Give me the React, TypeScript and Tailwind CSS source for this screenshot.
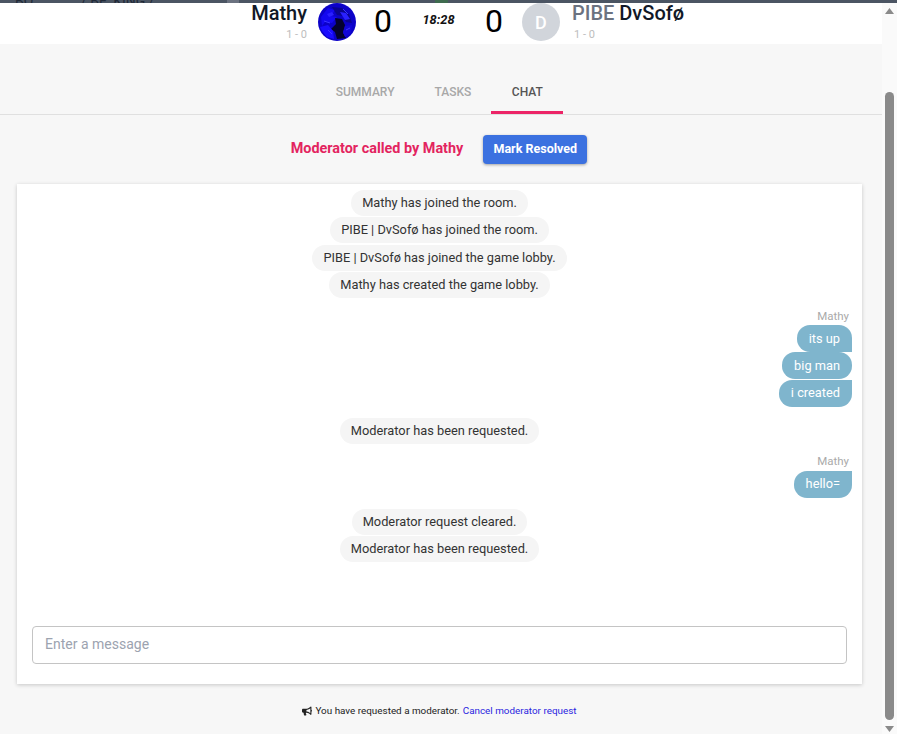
import { FaBullhorn } from "react-icons/fa";

const font = "font-['Roboto',sans-serif]";

function Notice({ text, className = "" }: { text: string; className?: string }) {
  return (
    <div className={`flex justify-center ${className}`}>
      <span className="flex h-[26px] items-center rounded-[13px] bg-[#f5f5f5] px-[11px] text-[12.8px] text-[#333]">
        {text}
      </span>
    </div>
  );
}

function Bubble({ text, corner }: { text: string; corner: string }) {
  return (
    <div className="flex justify-end">
      <span className={`flex h-[27px] items-center rounded-[13px] bg-[#7fb5cd] px-3 text-[12.8px] text-white ${corner}`}>
        {text}
      </span>
    </div>
  );
}

function Avatar() {
  return (
    <svg width="38" height="38" viewBox="0 0 38 38" className="shrink-0">
      <circle cx="19" cy="19" r="19" fill="#0c02c8" />
      <path d="M3 14l7-9 7 2-4 6 6 1-5 6-7-1-3 4z" fill="#1408f0" />
      <path d="M14 4l10 1 7 6 3 9-6-1-3-6-6-1z" fill="#0a0490" />
      <path d="M22 9l6 1 4 6-5 1zM9 11l5-2 2 3-5 2z" fill="#2a20ff" />
      <path d="M17 15l7 1 3 6-2 8 3 5-9 1-2-7-4-3 5-5z" fill="#04022e" />
      <path d="M2 24l8-2 5 6 1 8-7-2-5-6z" fill="#1a0cff" />
      <path d="M27 23l7-1-1 8-6 4-2-5z" fill="#1206d8" />
      <path d="M6 18l6 2M10 27l4 4M28 27l4-2M25 6l5 5" stroke="#3a34ff" strokeWidth="1" fill="none" />
    </svg>
  );
}

export default function App() {
  return (
    <div className={`flex h-[734px] w-full overflow-hidden bg-[#f7f7f7] ${font}`}>
      <div className="flex min-w-0 flex-1 flex-col">
        {/* tail of the bar scrolled away above */}
        <div className="flex h-[3px] shrink-0 overflow-hidden bg-[#4b5563] text-[14px] leading-[3px] text-[#1f2937]">
          <span className="ml-[15px] w-[65px] shrink-0">BQ</span>
          <span className="w-[147px] shrink-0 pl-[1px]">/ BE_KING /</span>
          <span className="h-[3px] w-[12px] shrink-0 bg-[#6b7280]" />
          <span className="ml-[196px] h-[3px] w-[13px] shrink-0 bg-[#3f6b4f]" />
        </div>

        {/* scoreboard */}
        <div className="flex h-[41px] shrink-0 items-start bg-white pr-[5px]">
          <div className="flex min-w-0 flex-1 justify-end">
            <div className="flex flex-col items-end">
              <span className="text-[20px] font-medium leading-[20px] text-[#111827]">Mathy</span>
              <span className="mt-[5px] text-[11px] leading-[13px] text-[#bdbdbd]">1 - 0</span>
            </div>
            <div className="ml-[11px]">
              <Avatar />
            </div>
            <span className="ml-[18px] text-[32px] leading-[36px] text-black">0</span>
          </div>
          <span className="mt-[9px] w-[93px] shrink-0 text-center text-[12.8px] font-bold italic leading-[16px] text-[#111]">18:28</span>
          <div className="flex min-w-0 flex-1 justify-start">
            <span className="text-[32px] leading-[36px] text-black">0</span>
            <div className="ml-[19px] flex h-[38px] w-[38px] shrink-0 items-center justify-center rounded-full bg-[#d1d5db] text-[18px] font-medium text-white">
              D
            </div>
            <div className="ml-[12px] flex flex-col items-start">
              <span className="whitespace-nowrap text-[20px] font-medium leading-[20px] text-[#111827]">
                <span className="text-[#6b7280]">PIBE</span> DvSofø
              </span>
              <span className="ml-[2px] mt-[5px] text-[11px] leading-[13px] text-[#bdbdbd]">1 - 0</span>
            </div>
          </div>
        </div>

        {/* tabs */}
        <div className="mt-[26px] flex h-[45px] shrink-0 justify-center border-b border-[#e0e0e0] pr-[3px]">
          <div className="flex h-[43px] items-center px-5 text-[12px] font-medium text-[#a8a8a8]">SUMMARY</div>
          <div className="flex h-[43px] items-center px-5 text-[12px] font-medium text-[#a8a8a8]">TASKS</div>
          <div className="flex h-[44px] w-[72px] items-center justify-center border-b-[3px] border-[#ec2467] pt-[2px] text-[12px] font-medium text-[#555]">CHAT</div>
        </div>

        {/* moderator call */}
        <div className="mt-5 flex h-[29px] shrink-0 items-center justify-center gap-5 pr-[4px]">
          <span className="mb-[2px] text-[14.4px] font-bold text-[#e3245f]">Moderator called by Mathy</span>
          <button className="h-[29px] w-[104px] rounded bg-[#3b71e0] text-[12.5px] font-bold text-white shadow-[0_1px_3px_rgba(0,0,0,0.35)]">
            Mark Resolved
          </button>
        </div>

        {/* chat card */}
        <div className="mx-[17px] mt-5 flex h-[500px] w-[845px] shrink-0 flex-col bg-white pt-[6px] shadow-[0_1px_4px_rgba(0,0,0,0.2)]">
          <div className="flex flex-1 flex-col px-[10px]">
            <Notice text="Mathy has joined the room." />
            <Notice text="PIBE | DvSofø has joined the room." className="mt-[1px]" />
            <Notice text="PIBE | DvSofø has joined the game lobby." className="mt-[2px]" />
            <Notice text="Mathy has created the game lobby." className="mt-[1px]" />

            <div className="mt-[12px] pr-[3px] text-right text-[11.5px] leading-[13px] text-[#aaa]">Mathy</div>
            <div className="mt-[2px]">
              <Bubble text="its up" corner="rounded-br-none" />
            </div>
            <div>
              <Bubble text="big man" corner="h-[26px]" />
            </div>
            <div className="mt-[1px]">
              <Bubble text="i created" corner="rounded-tr-none pb-[1px]" />
            </div>

            <Notice text="Moderator has been requested." className="mt-[11px]" />

            <div className="mt-[11px] pr-[3px] text-right text-[11.5px] leading-[13px] text-[#aaa]">Mathy</div>
            <div className="mt-[3px]">
              <Bubble text="hello=" corner="rounded-tr-none pb-[1px]" />
            </div>

            <Notice text="Moderator request cleared." className="mt-[11px]" />
            <Notice text="Moderator has been requested." className="mt-[1px]" />
          </div>
          <div className="px-[15px] pb-5">
            <input
              placeholder="Enter a message"
              className="h-[38px] w-full rounded border border-[#c4c4c4] px-3 pb-[2px] text-[14px] outline-none placeholder:text-[#9ca3af]"
            />
          </div>
        </div>

        {/* footer */}
        <div className="mt-[20px] flex items-center justify-center pr-[3px] text-[9.9px] leading-[13px] text-[#222]">
          <FaBullhorn className="mr-[3px] text-[10px] text-[#222]" />
          <span>You have requested a moderator.</span>
          <a className="ml-[3px] text-[#2a1fe0]">Cancel moderator request</a>
        </div>
      </div>

      {/* scrollbar */}
      <div className="flex w-[15px] shrink-0 flex-col items-center bg-[#fafafa]">
        <div className="h-[3px] w-full bg-[#4b5563]" />
        <svg width="9" height="6" viewBox="0 0 9 6" className="mt-[5px]">
          <path d="M4.5 0L9 6H0z" fill="#8a8a8a" />
        </svg>
        <div className="mt-[78px] h-[628px] w-[9px] rounded-full bg-[#8a8a8a]" />
        <svg width="9" height="6" viewBox="0 0 9 6" className="mt-[6px]">
          <path d="M0 0h9L4.5 6z" fill="#8a8a8a" />
        </svg>
      </div>
    </div>
  );
}
